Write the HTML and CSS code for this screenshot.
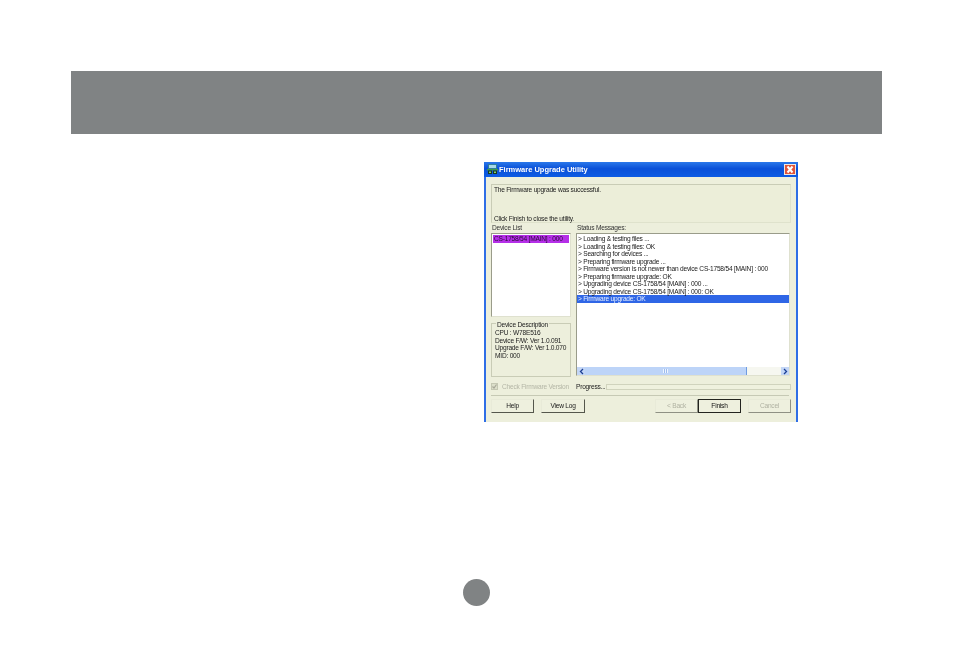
FILE: index.html
```html
<!DOCTYPE html>
<html lang="en">
<head>
<meta charset="utf-8">
<title>Firmware Upgrade Utility</title>
<link rel="stylesheet" href="styles.css">
</head>
<body>
<div class="band"></div>
<div class="window">
  <div class="titlebar">
    <svg class="appicon" width="11" height="11" viewBox="0 0 11 11"><rect x="1" y="0" width="9" height="5" fill="#2f7f9a"/><rect x="2" y="1" width="7" height="3" fill="#a8d8e8"/><rect x="0" y="5" width="11" height="1.500" fill="#3f9a4a"/><rect x="1" y="6.500" width="4" height="3.500" fill="#16381f"/><rect x="6" y="6.500" width="4" height="3.500" fill="#16381f"/><rect x="2" y="7.500" width="2" height="1.500" fill="#7fd070"/><rect x="7" y="7.500" width="2" height="1.500" fill="#7fd070"/></svg>
    <span class="titletext">Firmware Upgrade Utility</span>
    <span class="close"><svg width="10" height="9" viewBox="0 0 10 9"><path d="M2.500 1.500l5 6M7.500 1.500l-5 6" stroke="#fff" stroke-width="2" fill="none"/></svg></span>
  </div>
  <div class="face">
    <div class="notice">
      <div>The Firmware upgrade was successful.</div>
      <div>Click Finish to close the utility.</div>
    </div>
    <div class="columns">
      <div class="leftcol">
        <div class="label">Device List</div>
        <div class="listbox devices"><div class="devrow">CS-1758/54 [MAIN] : 000</div></div>
        <div class="group">
          <span class="legend">Device Description</span>
          <div>CPU : W78E516</div>
          <div>Device F/W: Ver 1.0.091</div>
          <div>Upgrade F/W: Ver 1.0.070</div>
          <div>MID: 000</div>
        </div>
      </div>
      <div class="rightcol">
        <div class="label">Status Messages:</div>
        <div class="listbox status">
          <div class="messages">
            <div class="msg">&gt; Loading &amp; testing files ...</div>
            <div class="msg">&gt; Loading &amp; testing files: OK</div>
            <div class="msg">&gt; Searching for devices ...</div>
            <div class="msg">&gt; Preparing firmware upgrade ...</div>
            <div class="msg">&gt; Firmware version is not newer than device CS-1758/54 [MAIN] : 000</div>
            <div class="msg">&gt; Preparing firmware upgrade: OK</div>
            <div class="msg">&gt; Upgrading device CS-1758/54 [MAIN] : 000 ...</div>
            <div class="msg">&gt; Upgrading device CS-1758/54 [MAIN] : 000: OK</div>
            <div class="msg selected">&gt; Firmware upgrade: OK</div>
          </div>
          <div class="scrollbar">
            <span class="arrow"><svg width="5" height="7" viewBox="0 0 5 7"><path d="M4 1L1.500 3.500 4 6" stroke="#1c3f94" stroke-width="1.300" fill="none"/></svg></span>
            <span class="thumb"><span class="grip"></span></span>
            <span class="track"></span>
            <span class="arrow"><svg width="5" height="7" viewBox="0 0 5 7"><path d="M1 1l2.500 2.500L1 6" stroke="#1c3f94" stroke-width="1.300" fill="none"/></svg></span>
          </div>
        </div>
      </div>
    </div>
    <div class="progressline">
      <span class="check"><svg width="7" height="7" viewBox="0 0 7 7"><path d="M1.500 3.500l1.500 1.500 2.500-3.500" stroke="#a8a898" stroke-width="1.200" fill="none"/></svg></span>
      <span class="checklabel">Check Firmware Version</span>
      <span class="progresslabel">Progress...</span>
      <span class="progressbar"></span>
    </div>
    <div class="separator"></div>
    <div class="buttons">
      <span class="btn help">Help</span>
      <span class="btn viewlog">View Log</span>
      <span class="spacer"></span>
      <span class="btn back off">&lt; Back</span>
      <span class="btn finish">Finish</span>
      <span class="btn cancel off">Cancel</span>
    </div>
  </div>
</div>
<div class="pagedot"></div>
</body>
</html>
```
FILE: styles.css
```css
* { box-sizing: border-box; }
html, body { margin: 0; padding: 0; background: #fff; }
body {
  width: 954px;
  height: 664px;
  overflow: hidden;
  padding-top: 71px;
  font-family: "Liberation Sans", Arial, sans-serif;
  font-size: 6.600px;
  letter-spacing: -0.220px;
  line-height: 7.500px;
  color: #1a1a1a;
}
.band { width: 811px; height: 63px; margin-left: 71px; background: #808384; }
.window {
  width: 314px;
  height: 260px;
  margin: 28px 0 0 484px;
  display: flex;
  flex-direction: column;
  filter: blur(0.25px);
}
.titlebar {
  height: 15px;
  flex: none;
  display: flex;
  align-items: center;
  padding: 0 2px 0 3px;
  background: linear-gradient(#2a78ea, #0a50d8 45%, #0d5ce4);
  color: #fff;
}
.appicon { flex: none; }
.titletext { margin-left: 1px; font-size: 7.500px; font-weight: bold; letter-spacing: 0; }
.close {
  margin-left: auto;
  width: 12px;
  height: 11px;
  display: flex;
  align-items: center;
  justify-content: center;
  background: #e0553a;
  border: 1px solid #f0e8e0;
}
.face {
  flex: 1;
  background: #edefdc;
  border-left: 2px solid #2f6ee6;
  border-right: 2px solid #2f6ee6;
  padding: 7px 5px 0 5px;
  display: flex;
  flex-direction: column;
}
.notice {
  height: 39px;
  flex: none;
  padding: 1px 2px 0;
  border: 1px solid #dfe2cc;
  border-top-color: #c9ccb6;
  border-left-color: #c9ccb6;
  background: #eceed9;
  display: flex;
  flex-direction: column;
  justify-content: space-between;
}
.columns { display: flex; gap: 5px; margin-top: 1px; flex: none; }
.leftcol { width: 80px; flex: none; }
.rightcol { width: 214px; flex: none; }
.label { height: 9px; padding-left: 1px; color: #333; }
.listbox {
  background: #fff;
  border: 1px solid #9a9c8a;
  border-right-color: #dfe1cf;
  border-bottom-color: #dfe1cf;
}
.devices { height: 84px; padding: 1px; }
.devrow { height: 8px; padding-left: 1px; background: #b52fe8; color: #2c0a3a; white-space: nowrap; overflow: hidden; }
.group {
  position: relative;
  height: 54px;
  margin-top: 6px;
  padding: 5px 0 0 3px;
  border: 1px solid #c9ccb6;
  color: #222;
}
.group div { white-space: nowrap; }
.legend { position: absolute; top: -3px; left: 4px; padding: 0 1px; background: #edefdc; }
.status { height: 143px; display: flex; flex-direction: column; }
.messages { flex: 1; padding-top: 1px; }
.msg { height: 7.500px; padding-left: 1px; white-space: nowrap; }
.selected { background: #2f66e6; color: #e8f0ff; }
.scrollbar { flex: none; height: 8px; display: flex; }
.arrow {
  flex: none;
  width: 8px;
  display: flex;
  align-items: center;
  justify-content: center;
  background: #c3d6f6;
}
.thumb {
  flex: none;
  width: 162px;
  display: flex;
  align-items: center;
  justify-content: center;
  background: #bdd4f8;
  border-right: 1px solid #6f9be0;
}
.grip { width: 5px; height: 4px; background: repeating-linear-gradient(90deg, #eef4ff 0 1px, #9dbcec 1px 2px); }
.track { flex: 1; background: #f6f7f0; }
.progressline { display: flex; align-items: center; height: 9px; margin-top: 5px; flex: none; }
.check {
  width: 7px;
  height: 7px;
  flex: none;
  display: flex;
  background: #dcdfca;
  outline: 1px solid #c4c7b2;
  outline-offset: -1px;
}
.checklabel { margin-left: 4px; width: 74px; flex: none; color: #b4b6a6; white-space: nowrap; }
.progresslabel { width: 30px; flex: none; color: #222; white-space: nowrap; }
.progressbar { flex: 1; height: 6px; border: 1px solid #d0d3bd; background: #eff1de; }
.separator { height: 1px; margin: 4px 2px 0 0; background: #c6c9b4; flex: none; }
.buttons { display: flex; margin-top: 3px; height: 14px; flex: none; }
.spacer { flex: 1; }
.btn {
  display: flex;
  align-items: center;
  justify-content: center;
  height: 14px;
  color: #1a1a1a;
  background: #eef0de;
  border: 1px solid #e8ead8;
  border-right-color: #55574c;
  border-bottom-color: #55574c;
}
.help { width: 43px; }
.viewlog { width: 44px; margin-left: 7px; }
.back { width: 43px; }
.finish { width: 43px; border: 1px solid #23241f; color: #111; }
.cancel { width: 43px; margin-left: 7px; }
.off { color: #b0b2a2; border-right-color: #8f9184; border-bottom-color: #8f9184; }
.pagedot { width: 27px; height: 27px; margin: 157px 0 0 463px; border-radius: 50%; background: #808384; }
```
